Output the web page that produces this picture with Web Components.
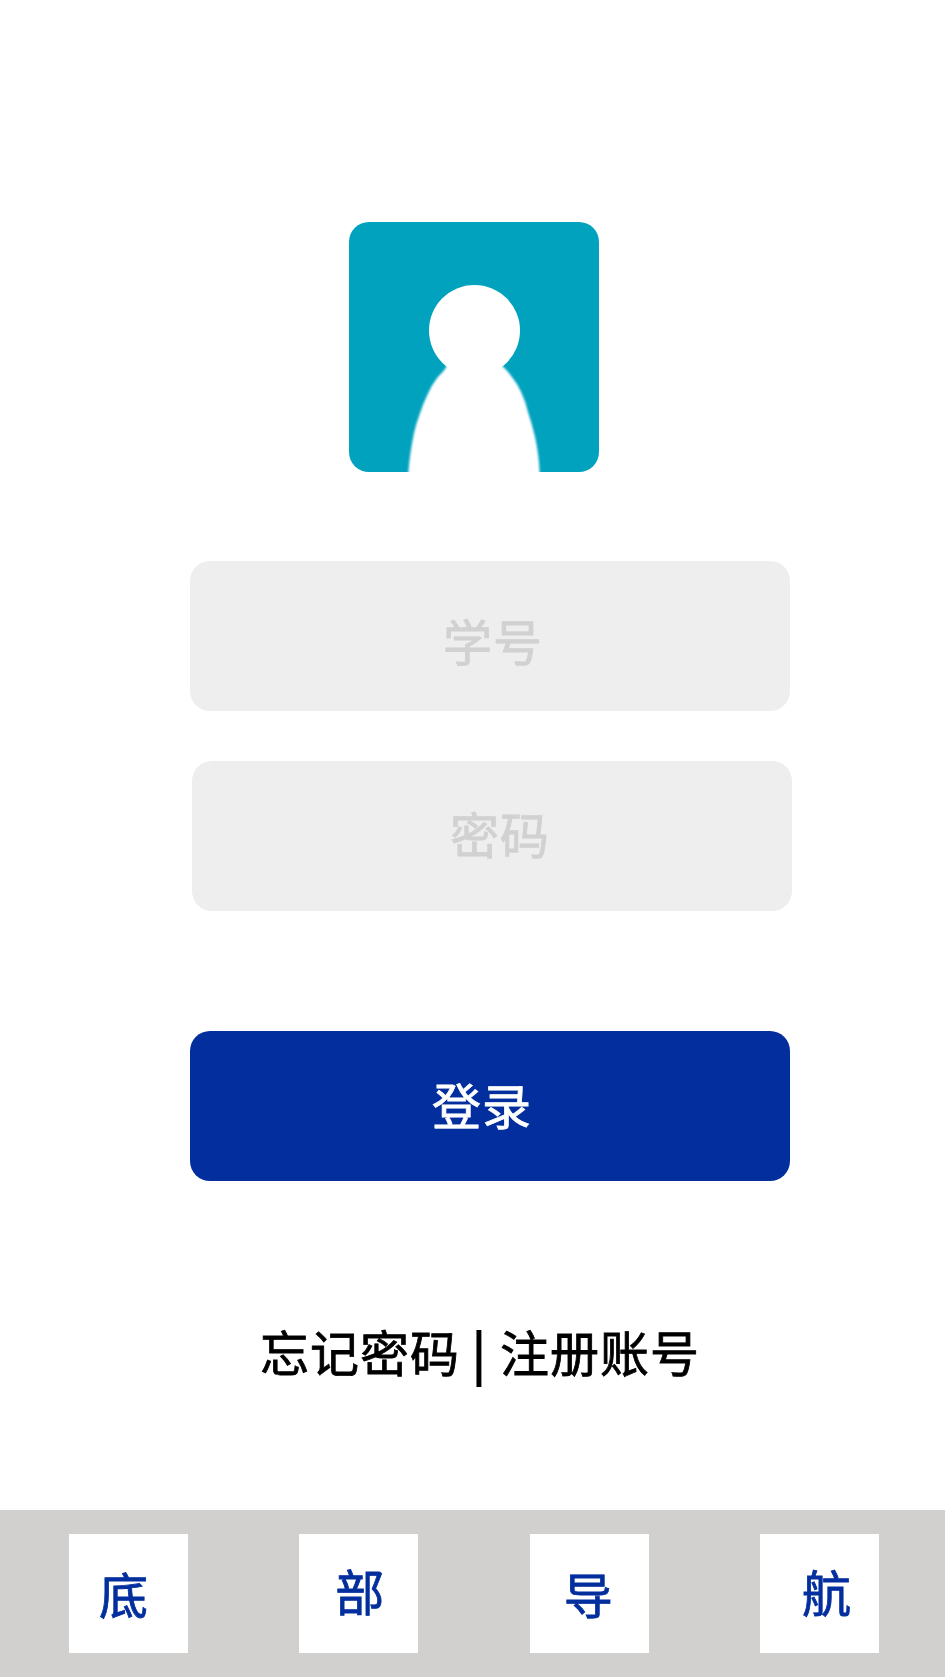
<!DOCTYPE html>
<html lang="zh-CN">
<head>
<meta charset="utf-8">
<title>登录</title>
<style>
html,body{margin:0;padding:0;background:#fff}
body{font-family:"Noto Sans CJK SC",sans-serif;font-size:49px;letter-spacing:1px;line-height:50px;color:#000;-webkit-text-stroke:0.8px currentColor}
</style>
</head>
<body>
<login-page></login-page>
<script>
const define = (name, html) => customElements.define(name, class extends HTMLElement {
  constructor() {
    super();
    const t = document.createElement('template');
    t.innerHTML = html;
    this.attachShadow({ mode: 'open' }).append(t.content.cloneNode(true));
  }
});

define('user-avatar', `
<style>:host{display:block;width:250px;height:250px;border-radius:20px;background:#00a2be;overflow:hidden}svg{display:block}</style>
<svg width="250" height="250" viewBox="0 0 250 250" fill="#fff">
  <defs><filter id="soft" x="-10%" y="-10%" width="120%" height="120%"><feGaussianBlur stdDeviation="1.1"/></filter></defs>
  <circle cx="125.5" cy="108.5" r="45.5"/>
  <path filter="url(#soft)" d="M106 137L97.7 144C95 150 91 152 87.7 156.5Q82 164 78.3 173Q74 182 71 191.3Q67 202 65 211Q60.5 233 59.4 250V262H190.6V250Q190 233 186 214.7Q183 202 179.3 191Q176.5 179 172 169.7Q168 161 162.7 154.7Q158 148 153.3 144L145 137Z"/>
</svg>`);

define('text-field', `
<style>:host{display:block;box-sizing:border-box;width:600px;height:150px;border-radius:20px;background:#eee;color:#d1d1d1;-webkit-text-stroke-color:#d1d1d1;white-space:nowrap}</style>
<slot></slot>`);

define('primary-button', `
<style>:host{display:block;box-sizing:border-box;width:600px;height:150px;border-radius:20px;background:#032f9e;color:#fff;-webkit-text-stroke-color:#fff;white-space:nowrap}</style>
<slot></slot>`);

define('account-links', `
<style>:host{display:flex;height:57px;white-space:nowrap}.bar{font:61px/46px "Liberation Sans",sans-serif;letter-spacing:0;-webkit-text-stroke:0;margin:0 13px 0 11px}</style>
<slot name="forgot"></slot><span class="bar">|</span><slot name="register"></slot>`);

define('nav-tile', `
<style>:host{display:block;box-sizing:border-box;width:119px;height:119px;background:#fff;color:#032f9e;-webkit-text-stroke-color:#032f9e}</style>
<slot></slot>`);

define('bottom-nav', `
<style>
:host{display:flex;box-sizing:border-box;height:167px;padding:24px 66px 0 69px;justify-content:space-between;background:#d1d0ce}
.a{padding:34px 0 0 30px}.b{padding:31px 0 0 36px}.c{padding:34px 0 0 34px}.d{padding:32px 0 0 42px}
</style>
<nav-tile class="a">底</nav-tile><nav-tile class="b">部</nav-tile><nav-tile class="c">导</nav-tile><nav-tile class="d">航</nav-tile>`);

define('login-page', `
<style>
:host{display:flex;flex-direction:column;width:945px;height:1677px;overflow:hidden}
user-avatar{margin:222px 0 0 349px}
.id{margin:89px 0 0 190px;padding:54px 0 0 253px}
.pw{margin:50px 0 0 192px;padding:47px 0 0 258px}
primary-button{margin:120px 0 0 190px;padding:48px 0 0 242px}
account-links{margin:149px 0 0 260px}
account-links span{margin-top:-4px}
bottom-nav{margin-top:auto}
</style>
<user-avatar></user-avatar>
<text-field class="id">学号</text-field>
<text-field class="pw">密码</text-field>
<primary-button>登录</primary-button>
<account-links><span slot="forgot">忘记密码</span><span slot="register">注册账号</span></account-links>
<bottom-nav></bottom-nav>`);
</script>
</body>
</html>
